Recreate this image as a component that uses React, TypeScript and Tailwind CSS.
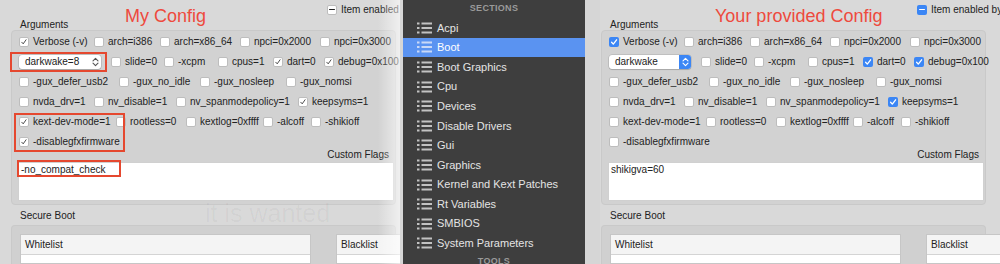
import React from "react";

type CbState = "off" | "on" | "mixed";

function Check({ state, blue }: { state: CbState; blue?: boolean }) {
  if (state === "off") {
    return (
      <span className="block w-[10px] h-[10px] shrink-0 rounded-[2px] bg-white border border-[#bdbdbd]" />
    );
  }
  if (blue) {
    return (
      <span className="flex w-[10px] h-[10px] shrink-0 rounded-[2px] bg-[#3b86f5] items-center justify-center">
        {state === "on" ? (
          <svg width="10" height="10" viewBox="0 0 10 10">
            <path d="M2.6 5.2 L4.3 7.1 L7.6 2.8" fill="none" stroke="white" strokeWidth="1.3" strokeLinecap="round" strokeLinejoin="round" />
          </svg>
        ) : (
          <span className="block w-[6px] h-[1.6px] bg-white rounded-full" />
        )}
      </span>
    );
  }
  return (
    <span className="flex w-[10px] h-[10px] shrink-0 rounded-[2px] bg-white border border-[#bdbdbd] items-center justify-center">
      {state === "on" ? (
        <svg width="10" height="10" viewBox="0 0 10 10">
          <path d="M2.2 5.3 L4 7.3 L7.6 2.2" fill="none" stroke="#222" strokeWidth="1" strokeLinecap="round" strokeLinejoin="round" />
        </svg>
      ) : (
        <span className="block w-[6px] h-[1.6px] bg-[#222] rounded-full" />
      )}
    </span>
  );
}

type Opt = { label: string; w: string; key: string };

const rows: Opt[][] = [
  [
    { key: "verbose", label: "Verbose (-v)", w: "w-[75px]" },
    { key: "i386", label: "arch=i386", w: "w-[66px]" },
    { key: "x86", label: "arch=x86_64", w: "w-[80px]" },
    { key: "npci2", label: "npci=0x2000", w: "w-[80px]" },
    { key: "npci3", label: "npci=0x3000", w: "w-[80px]" },
  ],
  [
    { key: "popup", label: "", w: "w-[92px]" },
    { key: "slide", label: "slide=0", w: "w-[53px]" },
    { key: "xcpm", label: "-xcpm", w: "w-[54px]" },
    { key: "cpus", label: "cpus=1", w: "w-[55px]" },
    { key: "dart", label: "dart=0", w: "w-[51px]" },
    { key: "debug", label: "debug=0x100", w: "w-[80px]" },
  ],
  [
    { key: "defer", label: "-gux_defer_usb2", w: "w-[100px]" },
    { key: "noidle", label: "-gux_no_idle", w: "w-[81px]" },
    { key: "nosleep", label: "-gux_nosleep", w: "w-[86px]" },
    { key: "nomsi", label: "-gux_nomsi", w: "w-[80px]" },
  ],
  [
    { key: "nvda", label: "nvda_drv=1", w: "w-[75px]" },
    { key: "nvdis", label: "nv_disable=1", w: "w-[82px]" },
    { key: "span", label: "nv_spanmodepolicy=1", w: "w-[122px]" },
    { key: "keepsyms", label: "keepsyms=1", w: "w-[80px]" },
  ],
  [
    { key: "kextdev", label: "kext-dev-mode=1", w: "w-[97px]" },
    { key: "rootless", label: "rootless=0", w: "w-[70px]" },
    { key: "kextlog", label: "kextlog=0xffff", w: "w-[77px]" },
    { key: "alcoff", label: "-alcoff", w: "w-[48px]" },
    { key: "shikioff", label: "-shikioff", w: "w-[60px]" },
  ],
  [{ key: "gfx", label: "-disablegfxfirmware", w: "w-[140px]" }],
];

function Chevrons({ color }: { color: string }) {
  return (
    <svg width="7" height="10" viewBox="0 0 7 10">
      <path d="M1 3.8 L3.5 1.3 L6 3.8" fill="none" stroke={color} strokeWidth="1.1" strokeLinecap="round" strokeLinejoin="round" />
      <path d="M1 6.2 L3.5 8.7 L6 6.2" fill="none" stroke={color} strokeWidth="1.1" strokeLinecap="round" strokeLinejoin="round" />
    </svg>
  );
}

function Popup({ text, blue }: { text: string; blue?: boolean }) {
  return (
    <div className="w-[82px] h-[14px] flex items-center bg-white rounded-[3px] shadow-[0_0_0_0.5px_rgba(0,0,0,0.18),0_1px_1px_rgba(0,0,0,0.12)]">
      <span className="flex-1 pl-[6px] leading-[14px]">{text}</span>
      {blue ? (
        <span className="w-[12px] h-[14px] flex items-center justify-center bg-[#3b86f5] rounded-r-[3px]">
          <Chevrons color="white" />
        </span>
      ) : (
        <span className="w-[12px] h-[14px] flex items-center justify-center">
          <Chevrons color="#555" />
        </span>
      )}
    </div>
  );
}

function Panel({
  checked,
  blue,
  popup,
  flags,
  title,
}: {
  checked: string[];
  blue?: boolean;
  popup: string;
  flags: string;
  title: string;
}) {
  return (
    <div className="relative w-[400px] shrink-0 flex flex-col text-[10px] text-[#222]">
      <span className="absolute left-[115px] top-[7px] text-[18px] leading-[18px] text-[#ee4a3d] whitespace-nowrap">
        {title}
      </span>
      <div className="h-[19px] flex items-center pl-[317px]">
        <Check state="mixed" blue={blue} />
        <span className="ml-[4px] whitespace-nowrap">Item enabled by default</span>
      </div>
      <div className="h-[11px] pl-[10px] leading-[11px]">Arguments</div>
      <div className="ml-[1px] w-[385px] h-[175px] rounded-[4px] bg-[#d2d2d2] border border-[#c9c9c9] flex flex-col pt-[1px]">
        {rows.map((row, i) => (
          <div key={i} className="h-[20px] flex items-center pl-[7px]">
            {row.map((o) =>
              o.key === "popup" ? (
                <div key={o.key} className={`${o.w} shrink-0`}>
                  <Popup text={popup} blue={blue} />
                </div>
              ) : (
                <div key={o.key} className={`${o.w} shrink-0 flex items-center gap-[4px] whitespace-nowrap`}>
                  <Check state={checked.includes(o.key) ? "on" : "off"} blue={blue} />
                  <span className="leading-[12px]">{o.label}</span>
                </div>
              )
            )}
          </div>
        ))}
        <div className="h-[10px] -mt-[2px] leading-[10px] text-right pr-[6px]">Custom Flags</div>
        <div className="ml-[6px] mt-[2px] w-[376px] h-[39px] bg-white border border-[#d0d0d0] pl-[2px] pt-[1px] leading-[12px]">
          {flags}
        </div>
      </div>
      <div className="h-[20px] pl-[10px] flex items-center">Secure Boot</div>
      <div className="ml-[1px] w-[385px] flex-1 rounded-t-[4px] bg-[#d0d0d0] border border-b-0 border-[#c9c9c9] pt-[8px] pl-[8px] flex gap-[25px]">
        <div className="w-[291px] shrink-0 flex flex-col bg-white border border-[#c6c6c6]">
          <div className="h-[20px] bg-[#f4f4f4] border-b border-[#d4d4d4] pl-[4px] flex items-center">Whitelist</div>
          <div className="flex-1" />
        </div>
        <div className="w-[200px] shrink-0 flex flex-col bg-white border border-[#c6c6c6]">
          <div className="h-[20px] bg-[#f4f4f4] border-b border-[#d4d4d4] pl-[4px] flex items-center">Blacklist</div>
          <div className="flex-1" />
        </div>
      </div>
    </div>
  );
}

function ListIcon({ color }: { color: string }) {
  return (
    <svg width="15" height="12" viewBox="0 0 15 12" className="shrink-0">
      {[0.5, 5, 9.5].map((y) => (
        <g key={y} fill={color}>
          <rect x="0" y={y} width="2.5" height="2" />
          <rect x="4.5" y={y} width="10.5" height="2" />
        </g>
      ))}
    </svg>
  );
}

const sections = [
  "Acpi",
  "Boot",
  "Boot Graphics",
  "Cpu",
  "Devices",
  "Disable Drivers",
  "Gui",
  "Graphics",
  "Kernel and Kext Patches",
  "Rt Variables",
  "SMBIOS",
  "System Parameters",
];

function Sidebar() {
  return (
    <div className="w-[200px] h-[264px] shrink-0 flex bg-[#d6d6d6]">
      <div className="w-[3px]" />
      <div className="w-[182px] bg-[#3e3e3e] flex flex-col">
        <div className="h-[18px] shrink-0 flex items-center justify-center text-[9px] font-bold tracking-[0.3px] text-[#9a9a9a]">
          SECTIONS
        </div>
        {sections.map((s) => {
          const sel = s === "Boot";
          return (
            <div
              key={s}
              className={`h-[19.6px] shrink-0 flex items-center pl-[14px] gap-[5px] text-[11px] ${
                sel ? "bg-[#5a93f1] text-white" : "text-[#e4e4e4]"
              }`}
            >
              <ListIcon color={sel ? "#c9d9f7" : "#c2c2c2"} />
              <span className="whitespace-nowrap">{s}</span>
            </div>
          );
        })}
        <div className="h-[18px] shrink-0 flex items-center justify-center text-[9px] font-bold tracking-[0.3px] text-[#9a9a9a]">
          TOOLS
        </div>
      </div>
      <div className="flex-1" />
    </div>
  );
}

export default function App() {
  return (
    <div className="w-[1000px] h-[264px] overflow-hidden flex bg-[#d9d9d9] font-['Liberation_Sans',Arial,sans-serif]">
      <div className="relative w-[400px] h-[264px] shrink-0 overflow-hidden pl-[10px] flex">
        <Panel
          title="My Config"
          checked={["verbose", "dart", "debug", "keepsyms", "kextdev", "gfx"]}
          popup="darkwake=8"
          flags="-no_compat_check"
        />
        <span className="absolute left-[205px] top-[199px] text-[25px] leading-[28px] text-black/[0.04] whitespace-nowrap">
          it is wanted
        </span>
        <span className="absolute left-[10px] top-[52px] w-[97px] h-[20px] border-2 border-[#e5482f]" />
        <span className="absolute left-[14px] top-[113px] w-[111px] h-[39px] border-2 border-[#e5482f]" />
        <span className="absolute left-[17px] top-[160px] w-[104px] h-[17px] border-2 border-[#e5482f]" />
        <span className="absolute right-0 top-0 w-[22px] h-[264px] bg-gradient-to-r from-white/0 to-white/60" />
      </div>
      <Sidebar />
      <div className="relative w-[400px] h-[264px] shrink-0 overflow-hidden flex">
        <Panel
          title="Your provided Config"
          blue
          checked={["verbose", "dart", "debug", "keepsyms"]}
          popup="darkwake"
          flags="shikigva=60"
        />
      </div>
    </div>
  );
}
